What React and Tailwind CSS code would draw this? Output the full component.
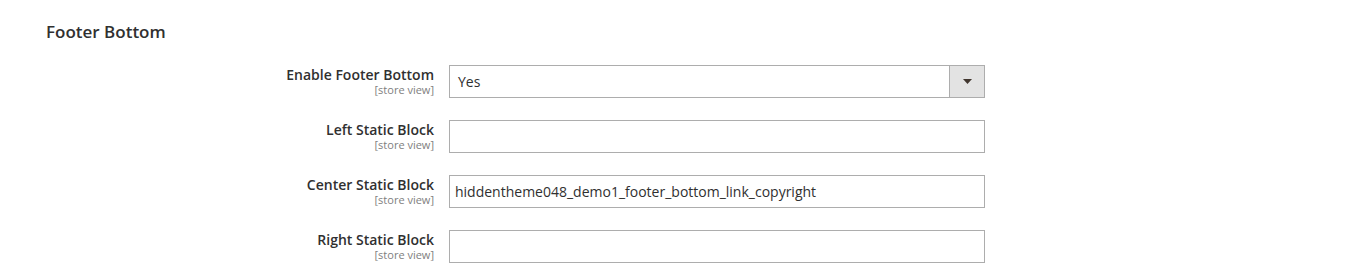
export default function App() {
  const rows = [
    { label: "Enable Footer Bottom", type: "select", value: "Yes" },
    { label: "Left Static Block", value: "" },
    { label: "Center Static Block", value: "hiddentheme048_demo1_footer_bottom_link_copyright" },
    { label: "Right Static Block", value: "" },
  ];
  return (
    <div className="w-[1356px] h-[279px] bg-white overflow-hidden" style={{ fontFamily: '"Open Sans", sans-serif' }}>
      <div className="pl-[46px] pt-[20px] h-[24px] box-content text-[17px] leading-[24px] font-semibold text-[#303030]">Footer Bottom</div>
      <div className="mt-[21px] flex flex-col gap-[22px]">
        {rows.map((r) => (
          <div key={r.label} className="flex">
            <div className="w-[434px] text-right">
              <div className="text-[14px] leading-[19px] font-semibold text-[#303030]">{r.label}</div>
              <div className="text-[11px] leading-[12px] text-[#808080]">[store view]</div>
            </div>
            <div className="ml-[15px] w-[536px] h-[33px] border border-[#adadad] bg-white flex items-center text-[14px] text-[#303030]">
              <span className={r.type === "select" ? "pl-[8px] flex-1" : "pl-[5px] flex-1"}>{r.value}</span>
              {r.type === "select" && (
                <div className="w-[35px] h-full bg-[#e3e3e3] border-l border-[#adadad] flex items-center justify-center">
                  <svg width="9" height="5" viewBox="0 0 9 5"><path d="M0 0h9L4.5 5z" fill="#41362f" /></svg>
                </div>
              )}
            </div>
          </div>
        ))}
      </div>
    </div>
  );
}
